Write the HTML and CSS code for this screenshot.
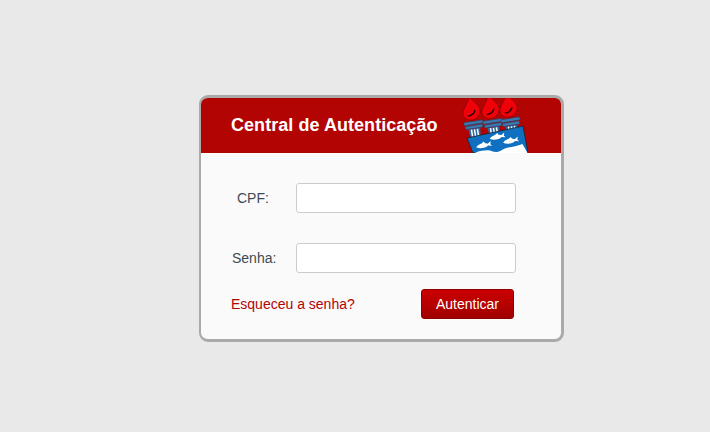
FILE: index.html
```html
<!DOCTYPE html>
<html lang="pt-BR">
<head>
<meta charset="utf-8">
<title>Central de Autenticação</title>
<link rel="stylesheet" href="styles.css">
</head>
<body>
<main class="card">
  <header class="card-head">
    <h1 class="title">Central de Autenticação</h1>
    <svg class="logo" viewBox="0 0 70 55" width="70" height="55" aria-hidden="true">
      <defs>
        <g id="torch">
          <path d="M10 -3 C9 3 17 7 18 13 C18.500 18 15 22 9.500 23 C4 23.500 .5 20 .5 16 C.5 10 9 5 10 -3Z" fill="#f00008" stroke="#7a0006" stroke-width=".6"/>
          <path d="M5 18.500 C9 18.500 12 17 13 13.500" fill="none" stroke="#2a0002" stroke-width="1.400"/>
          <path d="M0 24.500 H19 V27.500 H0Z M1 28.500 H18 V31.500 H1Z" fill="#3a7ab2" stroke="#234a72" stroke-width=".6"/>
          <path d="M3.500 32 H15.500 L14.500 40 H4.500Z" fill="#2a6aa8"/>
          <path d="M6.500 32.500 V39.500 M9.500 32.500 V39.500 M12.500 32.500 V39.500" stroke="#fff" stroke-width="1.500"/>
        </g>
        <path id="fish" d="M-8 0 C-5 -3 1 -3.500 4 -1 L7.500 -3 L6.500 0 L8 2 L4 .8 C1 3 -5 2.500 -8 0Z M-2 -2.500 L.5 -4 L1.500 -2Z" fill="#fff"/>
      </defs>
      <use href="#torch" transform="translate(3 -1) rotate(-9 9 20)"/>
      <use href="#torch" transform="translate(22 -2.500) rotate(-9 9 20)"/>
      <use href="#torch" transform="translate(40 -4) rotate(-9 9 20)"/>
      <path d="M7 40 L63 28 L68 55 L13 55Z" fill="#0f70c2" stroke="#1a1a1a" stroke-width=".7"/>
      <path d="M15 55 L17 54 C20 52.500 23 53 27 52.300 C31 51.800 33 54.500 37 54 C41 53.500 43 50.500 47 49.700 C52 49 57 48 62.500 46 L67.500 55Z" fill="#fff"/>
      <use href="#fish" transform="translate(24 47.500) rotate(-12)"/>
      <use href="#fish" transform="translate(37.500 39) rotate(-12)"/>
      <use href="#fish" transform="translate(51 43) rotate(-12)"/>
    </svg>
  </header>
  <form class="card-body">
    <div class="row row-cpf">
      <label class="label label-cpf" for="cpf">CPF:</label>
      <input class="input" id="cpf" type="text">
    </div>
    <div class="row row-senha">
      <label class="label label-senha" for="senha">Senha:</label>
      <input class="input" id="senha" type="password">
    </div>
    <div class="actions">
      <a class="forgot" href="#">Esqueceu a senha?</a>
      <button class="submit" type="button">Autenticar</button>
    </div>
  </form>
</main>
</body>
</html>
```
FILE: styles.css
```css
* { box-sizing: border-box; }
html, body { margin: 0; padding: 0; }
body {
  background: #e9e9e9;
  font-family: "Liberation Sans", Arial, sans-serif;
  height: 432px;
  overflow: hidden;
  padding: 95px 0 0 199px;
}
.card {
  width: 365px;
  height: 247px;
  border: 3px solid #aaaaaa;
  border-left-width: 2px;
  border-radius: 9px;
  background: #fafafa;
  overflow: hidden;
}
.card-head {
  position: relative;
  height: 55px;
  background: #b30404;
  display: flex;
  align-items: center;
  padding-left: 30px;
}
.title {
  margin: 0;
  font-size: 18px;
  font-weight: 700;
  letter-spacing: 0.05px;
  color: #fff;
}
.logo {
  position: absolute;
  left: 259px;
  top: 0;
}
.card-body {
  padding: 30px 45px 0 30px;
}
.row {
  display: flex;
  align-items: center;
  height: 30px;
}
.row-senha { margin-top: 30px; }
.label {
  font-size: 14px;
  color: #404a55;
}
.label-cpf { margin-left: 6px; width: 59px; }
.label-senha { margin-left: 1px; width: 64px; }
.input {
  width: 220px;
  height: 30px;
  border: 1px solid #cccccc;
  border-radius: 3px;
  background: #fff;
}
.actions {
  display: flex;
  justify-content: space-between;
  align-items: center;
  margin-top: 16px;
  padding-right: 2px;
}
.forgot {
  font-size: 14px;
  color: #b30404;
  text-decoration: none;
}
.submit {
  width: 93px;
  height: 30px;
  padding: 0;
  border: 1px solid #8f0000;
  border-radius: 3px;
  background: linear-gradient(to bottom, #cc0000, #a00000);
  color: #fff;
  font-family: inherit;
  font-size: 14px;
}
```
